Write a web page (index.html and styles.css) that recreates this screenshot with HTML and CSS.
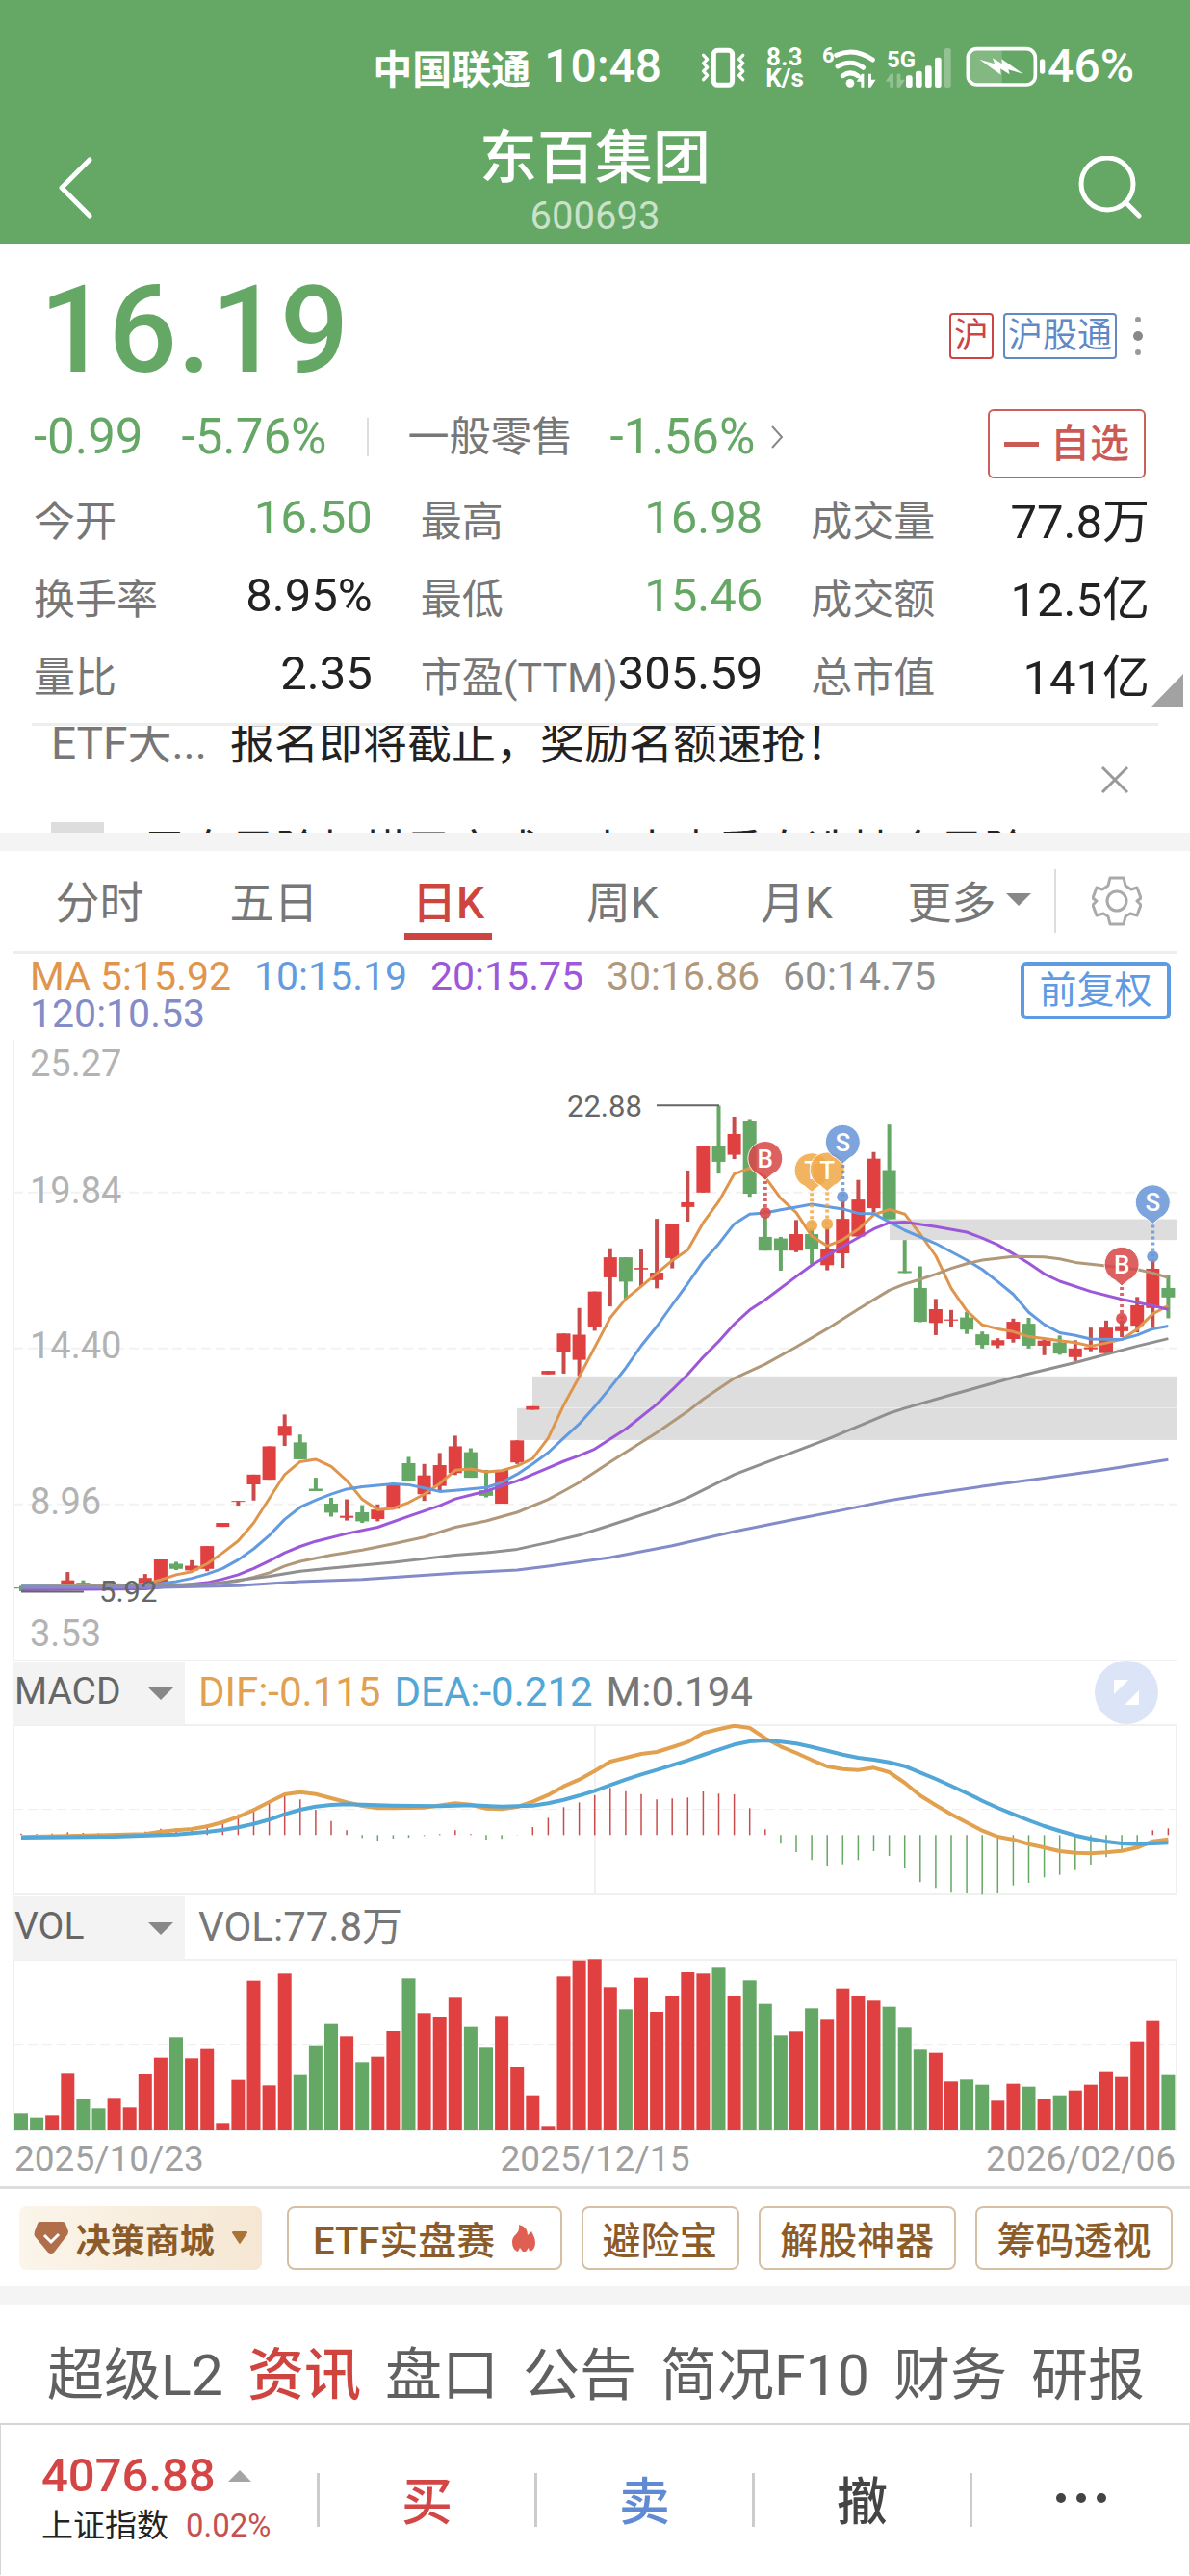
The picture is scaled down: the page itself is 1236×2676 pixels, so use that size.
FILE: index.html
```html
<!doctype html>
<html lang="zh-CN">

<head>
    <meta charset="utf-8">
    <meta name="viewport" content="width=device-width, initial-scale=1">
    <title>东百集团 600693</title>
    <link rel="stylesheet" href="styles.css">
</head>

<body>
    <header class="header">
        <div class="status">
            <span class="carrier">中国联通</span>
            <span class="clock">10:48</span>
            <svg class="status-icons" viewBox="70 40 1086 144" aria-hidden="true">
                <g fill="none" stroke="#fff" stroke-linecap="round" stroke-linejoin="round">
                    <rect x="122" y="62" width="58" height="108" rx="12" stroke-width="15" />
                    <path d="M90 77l12 13-12 12 12 13-12 12 12 13-12 13M213 77l-12 13 12 12-12 13 12 12-12 13 12 13" stroke-width="10" />
                    <path d="M504 77q57-26 113 14M508 112q43-24 80 4M524 141q24-17 47 0" stroke-width="15" />
                </g>
                <g fill="#fff">
                    <circle cx="547" cy="164" r="13" />
                    <path d="M567 159l16-24h7v42h-9v-18zM627 153l-16 24h-7v-42h9v18z" />
                    <path d="M657 159l16-24h9v42h-11v-18zM718 153l-16 24h-9v-42h11v18z" opacity=".3" />
                    <rect x="721" y="140" width="20" height="38" rx="7" />
                    <rect x="751" y="126" width="20" height="52" rx="7" />
                    <rect x="781" y="110" width="20" height="68" rx="7" />
                    <rect x="811" y="84" width="20" height="94" rx="7" />
                    <rect x="841" y="55" width="20" height="123" rx="7" opacity=".3" />
                    <path d="M935 60h85v110h-85q-20 0-20-20v-70q0-20 20-20z" opacity=".2" />
                    <rect x="1138" y="89" width="16" height="46" rx="8" />
                    <path d="M950 90l47 14-6-18 29 18-1-15 67 46-46-13 4 15-29-18 2 19z" />
                </g>
                <rect x="914" y="57" width="210" height="112" rx="28" fill="none" stroke="#fff" stroke-width="11" />
                <text class="st" x="286" y="109" font-size="78">8.3</text>
                <text class="st" x="284" y="176" font-size="78">K/s</text>
                <text class="st" x="460" y="101" font-size="66">6</text>
                <text class="st" x="661" y="114" font-size="72">5G</text>
            </svg>
            <span class="clock">46%</span>
        </div>
        <div class="titlebar">
            <button class="icon-btn back" aria-label="返回">
                <svg width="36" height="64" viewBox="0 0 36 64"><path d="M33 3L4 32l29 29" fill="none" stroke="#fff" stroke-width="5" stroke-linecap="round" stroke-linejoin="round" /></svg>
            </button>
            <div class="title">
                <h1>东百集团</h1>
                <div class="code">600693</div>
            </div>
            <button class="icon-btn" aria-label="搜索">
                <svg width="66" height="66" viewBox="0 0 66 66" fill="none" stroke="#fff" stroke-width="5" stroke-linecap="round"><circle cx="30" cy="29" r="27" /><path d="M49 48l14 14" /></svg>
            </button>
        </div>
    </header>

    <section class="quote">
        <div class="price-row">
            <span class="price">16.19</span>
            <div class="badges">
                <span class="badge red">沪</span>
                <span class="badge blue">沪股通</span>
                <svg width="12" height="44" viewBox="0 0 12 44" fill="#999"><circle cx="6" cy="5" r="3" /><circle cx="6" cy="22" r="5" fill="#888" /><circle cx="6" cy="39" r="3" /></svg>
            </div>
        </div>
        <div class="change-row">
            <span class="green">-0.99</span>
            <span class="green pct">-5.76%</span>
            <a class="sector" href="#sector">一般零售 <span class="green">-1.56%</span>
                <svg width="14" height="26" viewBox="0 0 14 26"><path d="M2 2l10 11L2 24" fill="none" stroke="#888" stroke-width="2" /></svg>
            </a>
            <button class="fav"><i></i>自选</button>
        </div>
        <dl class="stats">
            <div><dt>今开</dt><dd class="green">16.50</dd></div>
            <div><dt>最高</dt><dd class="green">16.98</dd></div>
            <div><dt>成交量</dt><dd>77.8万</dd></div>
            <div><dt>换手率</dt><dd>8.95%</dd></div>
            <div><dt>最低</dt><dd class="green">15.46</dd></div>
            <div><dt>成交额</dt><dd>12.5亿</dd></div>
            <div><dt>量比</dt><dd>2.35</dd></div>
            <div><dt>市盈(TTM)</dt><dd>305.59</dd></div>
            <div><dt>总市值</dt><dd>141亿</dd></div>
        </dl>
        <span class="corner"></span>
    </section>

    <section class="ticker">
        <div class="ticker-list">
            <p><span>ETF大...</span>报名即将截止，奖励名额速抢！</p>
            <p><i></i>早盘风险扫描已完成，点击查看自选持仓风险</p>
        </div>
        <button class="close" aria-label="关闭">
            <svg width="30" height="30" viewBox="0 0 30 30"><path d="M2 2l26 26M28 2L2 28" stroke="#999" stroke-width="3" /></svg>
        </button>
    </section>

    <div class="band"></div>

    <nav class="periods">
        <button>分时</button>
        <button>五日</button>
        <button class="active">日K</button>
        <button>周K</button>
        <button>月K</button>
        <button class="more">更多<i class="down"></i></button>
        <button class="gear" aria-label="设置">
            <svg width="52" height="52" viewBox="0 0 52 52" fill="none" stroke="#aaa" stroke-width="3" stroke-linejoin="round">
                <path d="M19 2h14l2 8 6 4 6-2 4 11-4 3 4 4-4 11-7-2-5 3-2 8H19l-2-8-5-3-7 2-4-11 4-4-4-3 4-11 6 2 6-4z" />
                <circle cx="26" cy="26" r="10" />
            </svg>
        </button>
    </nav>

    <section class="charts">
        <div class="ma">
            <div class="ma-list">
                <span class="ma5">MA 5:15.92</span>
                <span class="ma10">10:15.19</span>
                <span class="ma20">20:15.75</span>
                <span class="ma30">30:16.86</span>
                <span class="ma60">60:14.75</span>
                <span class="ma120">120:10.53</span>
            </div>
            <button class="adjust">前复权</button>
        </div>
        <svg id="kline" class="plot" viewBox="0 0 1236 651" role="img" aria-label="日K线"></svg>

        <div class="sub-head">
            <label class="indicator">
                <select aria-label="指标一"><option>MACD</option><option>KDJ</option></select>
                <i class="down"></i>
            </label>
            <span class="dif">DIF:-0.115</span>
            <span class="dea">DEA:-0.212</span>
            <span>M:0.194</span>
            <button class="expand" aria-label="放大">
                <svg width="66" height="66" viewBox="0 0 66 66"><circle cx="33" cy="33" r="33" fill="#dce5f8" /><path d="M20 20h15L20 35zM46 46H31l15-15z" fill="#fff" /></svg>
            </button>
        </div>
        <svg id="macd" class="plot" viewBox="0 0 1236 178" role="img" aria-label="MACD"></svg>

        <div class="sub-head">
            <label class="indicator">
                <select aria-label="指标二"><option>VOL</option><option>RSI</option></select>
                <i class="down"></i>
            </label>
            <span>VOL:77.8万</span>
        </div>
        <svg id="vol" class="plot" viewBox="0 0 1236 179" role="img" aria-label="成交量"></svg>
        <div class="dates"><span>2025/10/23</span><span>2025/12/15</span><span>2026/02/06</span></div>
    </section>

    <div class="tools">
        <button class="mall">
            <svg width="36" height="36" viewBox="0 0 36 36"><path d="M6 1h24q2 0 3 2l3 8q0 3-2 5L21 33q-3 2-6 0L1 16q-1-2 0-5l3-8q1-2 2-2z" fill="#b06f4a" /><path d="M11 15l7 7 8-8" fill="none" stroke="#fff" stroke-width="3" /></svg>
            决策商城
            <svg class="mall-arrow" width="16" height="14" viewBox="0 0 16 14"><path d="M1 0h14q2 1 0 3l-6 9q-1 2-2 0L1 3q-2-2 0-3z" fill="#aa7437" /></svg>
        </button>
        <button class="w3">ETF实盘赛
            <svg width="24" height="30" viewBox="0 0 24 30"><path d="M7 1q9 2 9 11l4-4q4 7 4 12 0 7-6 9l-1-4-3 4-3 0-3-4-2 4Q0 27 0 19q0-5 4-8 4-4 3-10z" fill="#df6052" /></svg>
        </button>
        <button class="w1">避险宝</button>
        <button class="w2">解股神器</button>
        <button class="w2">筹码透视</button>
    </div>

    <div class="band"></div>

    <nav class="tabs">
        <a href="#l2">超级L2</a>
        <a href="#news" class="active">资讯</a>
        <a href="#book">盘口</a>
        <a href="#notice">公告</a>
        <a href="#f10">简况F10</a>
        <a href="#finance">财务</a>
        <a href="#report">研报</a>
    </nav>

    <footer class="bar">
        <div class="index">
            <div class="index-value">4076.88<i class="up"></i></div>
            <div class="index-name">上证指数<span>0.02%</span></div>
        </div>
        <button class="buy">买</button>
        <button class="sell">卖</button>
        <button>撤</button>
        <button aria-label="更多操作">
            <svg width="54" height="12" viewBox="0 0 54 12" fill="#444"><circle cx="6" cy="6" r="5" /><circle cx="27" cy="6" r="5" /><circle cx="48" cy="6" r="5" /></svg>
        </button>
    </footer>

    <script src="chart.js"></script>
</body>

</html>
```

FILE: styles.css
```css
* {
    box-sizing: border-box;
}

body {
    margin: 0;
    background: #fff;
    color: #222;
    font-family: Roboto, "Noto Sans CJK SC", sans-serif;
    font-size: 43px;
}

button,
select {
    margin: 0;
    padding: 0;
    border: 0;
    background: none;
    color: inherit;
    font: inherit;
}

svg {
    display: block;
    flex: none;
}

a {
    color: inherit;
    text-decoration: none;
}

.green {
    color: #65a765;
}

/* header */
.header {
    background: #65a765;
    color: #fff;
}

.status {
    display: flex;
    align-items: center;
    justify-content: flex-end;
    height: 129px;
    padding: 8px 58px 0 0;
    font-weight: 500;
}

.carrier {
    margin-right: 14px;
    font-size: 41px;
    font-weight: 700;
}

.clock {
    font-size: 48px;
}

.status-icons {
    width: 362px;
    height: 48px;
    margin: 0 2px 0 37px;
}

.st {
    fill: #fff;
    font-weight: 700;
}

.titlebar {
    display: flex;
    align-items: center;
    justify-content: space-between;
    height: 124px;
    padding: 4px 50px 0;
}

.icon-btn {
    display: flex;
    width: 66px;
    padding-top: 4px;
}

.back {
    padding-left: 10px;
}

.title {
    text-align: center;
}

.title h1 {
    margin: 0;
    font-size: 60px;
    font-weight: 500;
    line-height: 64px;
}

.code {
    color: #c9e2c9;
    font-size: 40px;
    line-height: 56px;
}

/* quote */
.quote {
    position: relative;
    height: 498px;
    padding: 0 42px 0 35px;
}

.price-row {
    display: flex;
    align-items: center;
    justify-content: space-between;
    height: 158px;
    padding-top: 22px;
}

.price {
    padding-left: 6px;
    color: #65a765;
    font-size: 126px;
    font-weight: 500;
    line-height: 130px;
}

.badges {
    display: flex;
    align-items: center;
    gap: 10px;
    padding: 12px 6px 0 0;
}

.badge {
    height: 48px;
    padding: 0 3px;
    border: 2px solid;
    border-radius: 4px;
    font-size: 36px;
    line-height: 44px;
}

.badges svg {
    margin-left: 6px;
}

.red {
    color: #c44;
}

.blue {
    color: #6089c6;
}

.change-row {
    display: flex;
    align-items: center;
    height: 86px;
    font-size: 51px;
    line-height: 60px;
}

.pct {
    margin-left: 40px;
}

.sector {
    display: flex;
    align-items: center;
    gap: 16px;
    height: 40px;
    margin-left: 42px;
    padding-left: 40px;
    border-left: 2px solid #ddd;
    color: #777;
    font-size: 43px;
}

.sector .green {
    margin-left: 22px;
    font-size: 51px;
}

.fav {
    display: flex;
    align-items: center;
    justify-content: center;
    gap: 12px;
    width: 164px;
    height: 72px;
    margin: 14px 4px 0 auto;
    border: 2px solid #c9605c;
    border-radius: 6px;
    color: #cb5a56;
    font-size: 41px;
    font-weight: 500;
}

.fav i {
    width: 36px;
    height: 5px;
    background: #cb5a56;
}

.stats {
    display: grid;
    grid-template-columns: repeat(3, 1fr);
    grid-auto-rows: 81px;
    column-gap: 50px;
    margin: 0;
}

.stats div {
    display: flex;
    align-items: center;
    justify-content: space-between;
    white-space: nowrap;
}

.stats dt {
    color: #777;
    font-size: 43px;
}

.stats dd {
    margin: 0;
    font-size: 49px;
}

.corner {
    position: absolute;
    right: 7px;
    bottom: 17px;
    border-bottom: 34px solid #a2a2a2;
    border-left: 33px solid transparent;
}

/* ticker */
.ticker {
    display: flex;
    align-items: center;
    height: 114px;
    margin: 0 33px;
    border-top: 3px solid #eee;
}

.ticker-list {
    flex: 1;
    height: 100%;
    padding-left: 20px;
    overflow: hidden;
    font-size: 46px;
}

.ticker-list p {
    display: flex;
    height: 104px;
    margin: -12px 0 0;
    line-height: 60px;
    white-space: nowrap;
}

.ticker-list p + p {
    margin-top: 8px;
}

.ticker-list span {
    width: 186px;
    color: #777;
}

.ticker-list i {
    width: 55px;
    height: 40px;
    margin: 0 40px 0 0;
    background: #ddd;
}

.close {
    margin-right: 30px;
}

.band {
    height: 19px;
    background: #f4f4f4;
}

/* period tabs */
.periods {
    display: flex;
    align-items: center;
    height: 107px;
    margin: 0 13px;
    border-bottom: 3px solid #eee;
    color: #777;
    font-size: 46px;
}

.periods button {
    flex: 181;
    align-self: stretch;
    display: flex;
    align-items: center;
    justify-content: center;
    padding-bottom: 4px;
    white-space: nowrap;
}

.periods .active {
    position: relative;
    color: #ce453f;
    font-weight: 500;
}

.periods .active::after {
    content: "";
    position: absolute;
    bottom: 12px;
    width: 91px;
    height: 7px;
    background: #ce453f;
}

.periods .more {
    gap: 10px;
    flex: 177;
}

.periods .gear {
    flex: 126;
    align-self: center;
    height: 66px;
    padding: 0;
    border-left: 2px solid #ddd;
}

.down {
    border: 13px solid transparent;
    border-top-color: #888;
    border-bottom: 0;
}

/* charts */
.ma {
    display: flex;
    justify-content: space-between;
    padding: 4px 20px 1px 31px;
    font-size: 41px;
}

.ma-list {
    display: flex;
    flex-wrap: wrap;
    column-gap: 24px;
    width: 980px;
    line-height: 39px;
}

.ma5 { color: #e0954c; }
.ma10 { color: #629be0; }
.ma20 { color: #9d58da; }
.ma30 { color: #b1987a; }
.ma60 { color: #909090; }
.ma120 { color: #838bc8; }

.adjust {
    width: 156px;
    height: 60px;
    margin-top: 4px;
    border: 4px solid #5e9be2;
    border-radius: 6px;
    color: #5e9be2;
    font-size: 39px;
    line-height: 50px;
}

.plot {
    width: 100%;
    height: auto;
}

.axis {
    fill: #b3b3b3;
    font-size: 38px;
}

.peak {
    fill: #666;
    font-size: 31px;
}

.pin {
    fill: #fff;
    font-size: 26px;
    font-weight: 500;
    text-anchor: middle;
}

.sub-head {
    display: flex;
    align-items: center;
    gap: 14px;
    height: 66px;
    padding: 0 33px 0 13px;
    color: #777;
    font-size: 42px;
    line-height: 62px;
}

.indicator {
    position: relative;
    width: 179px;
    height: 66px;
}

.indicator select {
    width: 100%;
    height: 100%;
    padding: 0 0 6px 2px;
    border-radius: 0;
    background: #f3f3f3;
    color: #666;
    font-size: 39px;
    appearance: none;
}

.indicator .down {
    position: absolute;
    top: 28px;
    right: 12px;
    pointer-events: none;
}

.dif { color: #e2a14f; }
.dea { color: #52a7d6; }

.expand {
    margin-left: auto;
}

.dates {
    display: flex;
    justify-content: space-between;
    padding: 0 15px;
    color: #a0a0a0;
    font-size: 37px;
    line-height: 57px;
}

/* tools */
.tools {
    display: flex;
    align-items: center;
    gap: 20px;
    height: 104px;
    padding: 0 18px 0 20px;
    border-top: 3px solid #ddd;
    color: #8b5c29;
    font-size: 40px;
    font-weight: 500;
    white-space: nowrap;
}

.tools button {
    display: flex;
    align-items: center;
    justify-content: center;
    gap: 18px;
    height: 66px;
    border: 2px solid #d5c0a4;
    border-radius: 8px;
}

.tools .w1 { flex: 162; }
.tools .w2 { flex: 204; }
.tools .w3 { flex: 286; }

.tools .mall {
    flex: 255;
    gap: 8px;
    margin-right: 6px;
    border: 0;
    background: linear-gradient(90deg, #fbf5ea, #f5e7d3);
    font-size: 36px;
    font-weight: 700;
}

.mall-arrow {
    margin-left: 10px;
}

/* bottom */
.tabs {
    display: flex;
    align-items: center;
    justify-content: space-between;
    height: 123px;
    padding: 14px 47px 0 49px;
    color: #606060;
    font-size: 59px;
    white-space: nowrap;
}

.tabs .active {
    color: #d0443f;
    font-weight: 500;
}

.bar {
    display: grid;
    grid-template-columns: 328fr 226fr 226fr 226fr 228fr;
    align-items: center;
    height: 158px;
    border: 1px solid #d5d5d5;
    border-top-width: 2px;
    border-bottom: 0;
    color: #444;
}

.index {
    padding-left: 42px;
    white-space: nowrap;
}

.index-value {
    display: flex;
    align-items: center;
    gap: 13px;
    color: #d44646;
    font-size: 49px;
    font-weight: 500;
    line-height: 54px;
}

.up {
    border: 12px solid transparent;
    border-top: 0;
    border-bottom-color: #a5a5a5;
}

.index-name {
    color: #222;
    font-size: 33px;
    line-height: 50px;
}

.index-name span {
    margin-left: 18px;
    color: #c55050;
}

.bar button {
    display: flex;
    align-items: center;
    justify-content: center;
    height: 56px;
    padding-bottom: 4px;
    border-left: 3px solid #ccc;
    font-size: 53px;
    font-weight: 500;
}

.bar .buy { color: #d44646; }
.bar .sell { color: #608bd4; }
```

FILE: chart.js
```js
var NS = 'http://www.w3.org/2000/svg';
var RED = '#e04040', GREEN = '#65a765';
var STEP = 16.1, FIRST = 22;

function add(svg, tag, attrs, text) {
    var el = document.createElementNS(NS, tag);
    for (var k in attrs) el.setAttribute(k, attrs[k]);
    if (text) el.textContent = text;
    svg.appendChild(el);
    return el;
}
function cx(i) { return FIRST + STEP * i; }

// "index:value" pairs -> polyline
function line(svg, data, color, y, width) {
    var pts = data.split(' ').map(function (p) {
        var a = p.split(':');
        return cx(+a[0]).toFixed(1) + ',' + y(+a[1]).toFixed(1);
    });
    add(svg, 'polyline', { points: pts.join(' '), fill: 'none', stroke: color, 'stroke-width': width, 'stroke-linejoin': 'round' });
}

/* ---- K line ---- */
var k = document.getElementById('kline');
function ky(v) { return 6 + v / 2.45; }

add(k, 'path', { d: 'M14 6V651M14 651H1222', stroke: '#f0f0f0', 'stroke-width': 2, fill: 'none' });
[389, 786, 1183].forEach(function (v) {
    add(k, 'path', { d: 'M14 ' + ky(v) + 'H1222', stroke: '#f2f2f2', 'stroke-width': 2, 'stroke-dasharray': '10 5' });
});
// gaps: x, top, bottom
[[537, 938, 1019], [553, 857, 937], [924, 457, 510]].forEach(function (g) {
    add(k, 'rect', { x: g[0], y: ky(g[1]), width: 1222 - g[0], height: (g[2] - g[1]) / 2.45, fill: '#ddd' });
});
[[25.27, 93], [19.84, 416], [14.40, 812], [8.96, 1209], [3.53, 1544]].forEach(function (a) {
    add(k, 'text', { x: 31, y: ky(a[1]), 'class': 'axis' }, a[0].toFixed(2));
});

// index, up(1)/down(0), high, top, bottom, low
var candles = [
    [0, 0, 1390, 1394, 1397, 1404], [3, 1, 1355, 1376, 1392, 1392], [4, 0, 1376, 1382, 1390, 1390], [6, 1, 1380, 1384, 1390, 1390],
    [8, 1, 1360, 1370, 1388, 1388], [9, 1, 1323, 1323, 1383, 1383], [10, 0, 1329, 1334, 1347, 1350], [11, 1, 1325, 1339, 1351, 1352],
    [12, 1, 1289, 1289, 1347, 1353], [13, 1, 1230, 1230, 1240, 1240], [14, 1, 1174, 1174, 1176, 1186], [15, 1, 1107, 1107, 1132, 1173],
    [16, 1, 1035, 1035, 1120, 1120], [17, 1, 954, 983, 1008, 1034], [18, 0, 1005, 1025, 1068, 1068], [19, 0, 1115, 1143, 1149, 1149],
    [20, 0, 1166, 1181, 1204, 1214], [21, 1, 1170, 1212, 1217, 1224], [22, 0, 1185, 1203, 1226, 1230], [23, 1, 1183, 1196, 1220, 1226],
    [24, 1, 1128, 1133, 1194, 1196], [25, 0, 1062, 1078, 1123, 1125], [26, 1, 1080, 1109, 1157, 1174], [27, 1, 1052, 1083, 1136, 1148],
    [28, 1, 1008, 1035, 1103, 1108], [29, 0, 1040, 1050, 1115, 1115], [30, 0, 1095, 1147, 1161, 1165], [31, 1, 1095, 1095, 1181, 1181],
    [32, 1, 1020, 1020, 1076, 1080], [33, 1, 933, 933, 942, 942], [34, 1, 843, 843, 852, 852], [35, 1, 748, 748, 795, 850],
    [36, 1, 683, 751, 815, 856], [37, 1, 641, 641, 730, 741], [38, 1, 531, 554, 605, 679], [39, 0, 554, 554, 616, 660],
    [40, 1, 533, 581, 585, 628], [41, 1, 456, 593, 612, 633], [42, 1, 470, 470, 556, 582], [43, 1, 333, 414, 426, 463],
    [44, 1, 271, 271, 389, 389], [45, 0, 168, 271, 311, 341], [46, 1, 196, 240, 293, 304], [47, 0, 202, 206, 392, 400],
    [48, 0, 450, 502, 537, 537], [49, 0, 502, 506, 537, 588], [50, 1, 459, 495, 537, 541], [51, 0, 480, 495, 532, 572],
    [52, 1, 478, 532, 574, 587], [53, 1, 410, 456, 544, 581], [54, 1, 357, 407, 501, 501], [55, 1, 286, 303, 429, 440],
    [56, 0, 216, 332, 457, 457], [57, 0, 510, 589, 594, 594], [58, 0, 577, 632, 718, 719], [59, 1, 660, 686, 721, 752],
    [60, 1, 688, 712, 715, 732], [61, 0, 693, 707, 738, 749], [62, 0, 743, 750, 777, 786], [63, 1, 760, 765, 778, 785],
    [64, 1, 710, 718, 762, 771], [65, 0, 708, 723, 779, 786], [66, 1, 763, 766, 779, 803], [67, 0, 753, 771, 799, 802],
    [68, 1, 765, 786, 808, 818], [69, 1, 733, 783, 788, 793], [70, 1, 715, 733, 798, 798], [71, 1, 715, 729, 742, 757],
    [72, 1, 655, 676, 728, 745], [73, 1, 560, 583, 683, 731], [74, 0, 598, 632, 656, 709]
];
candles.forEach(function (c) {
    var x = cx(c[0]), color = c[1] ? RED : GREEN;
    add(k, 'path', { d: 'M' + x + ' ' + ky(c[2]) + 'V' + ky(c[5]), stroke: c[1] ? '#c94c4c' : GREEN, 'stroke-width': 4 });
    add(k, 'rect', { x: x - 7, y: ky(c[3]), width: 14, height: Math.max(1, (c[4] - c[3]) / 2.45), fill: color });
});

line(k, '0:1391 7:1389 8:1385 9:1375 10:1362 11:1354 12:1334 13:1306 14:1276 15:1230 16:1168 17:1107 18:1074 19:1068 20:1086 21:1122 22:1170 23:1196 24:1193 25:1178 26:1157 27:1130 28:1096 29:1093 30:1100 31:1097 32:1085 33:1066 34:1014 35:930 36:858 37:783 38:708 39:660 40:628 41:595 42:562 43:535 44:466 45:412 46:342 47:327 48:350 49:404 50:440 51:500 52:525 53:509 54:483 55:446 56:432 57:444 58:495 59:550 60:633 61:690 62:726 63:736 64:743 65:756 66:761 67:766 68:771 69:780 70:772 71:763 72:737 73:698 74:677', '#e0954c', ky, 3);
line(k, '0:1391 8:1388 9:1384 10:1379 11:1371 12:1360 13:1346 14:1324 15:1296 16:1262 17:1221 18:1190 19:1172 20:1157 21:1144 22:1138 24:1131 25:1133 26:1141 27:1150 28:1147 30:1140 31:1127 32:1106 33:1080 34:1051 35:1014 36:978 37:934 38:886 39:836 40:779 41:730 42:675 43:621 44:564 45:520 46:469 47:444 48:441 49:433 50:426 51:419 52:425 53:431 54:442 55:443 56:464 57:485 59:519 61:561 62:585 63:616 64:648 65:694 66:725 67:746 68:753 69:762 71:763 72:752 73:736 74:729', '#629be0', ky, 3);
line(k, '0:1400 8:1398 10:1390 12:1382 13:1373 14:1362 15:1346 16:1327 17:1306 18:1290 19:1277 21:1257 23:1241 25:1213 27:1186 28:1169 30:1149 32:1123 34:1090 35:1073 36:1059 37:1042 39:991 41:928 42:891 43:852 44:808 45:768 46:724 47:688 48:662 50:603 51:574 53:526 55:482 56:466 57:464 59:476 61:490 62:505 63:522 64:545 65:569 66:596 67:615 69:641 71:661 73:677 74:687', '#9d58da', ky, 3);
line(k, '0:1392 12:1386 14:1378 15:1368 16:1357 17:1340 18:1328 20:1312 22:1299 24:1283 26:1266 28:1241 30:1225 32:1203 34:1170 35:1149 36:1127 38:1075 41:1000 43:946 44:915 46:862 48:826 50:782 52:736 54:686 56:638 57:622 58:610 59:597 60:582 61:570 62:561 64:552 66:553 67:558 68:567 70:576 72:585 73:594 74:606', '#b1987a', ky, 3);
line(k, '0:1394 12:1388 14:1376 16:1366 18:1353 20:1345 24:1330 28:1312 30:1306 32:1297 34:1280 36:1261 38:1236 41:1197 43:1166 46:1107 50:1047 52:1017 54:984 56:951 57:938 60:904 64:860 68:822 72:780 74:761', '#909090', ky, 3);
line(k, '0:1394 9:1394 14:1390 18:1379 22:1374 28:1358 32:1350 34:1340 38:1318 42:1288 46:1252 50:1220 53:1197 56:1173 58:1160 62:1137 66:1116 70:1094 74:1069', '#838bc8', ky, 3);

add(k, 'path', { d: 'M682 ' + ky(167) + 'H747M22 ' + ky(1405) + 'H87', stroke: '#666', 'stroke-width': 2 });
add(k, 'text', { x: 589, y: ky(195), 'class': 'peak' }, '22.88');
add(k, 'text', { x: 103, y: ky(1431), 'class': 'peak' }, '5.92');

// trade marks: index, letter, pin centre, dot, colour
[[48, 'B', 304, 441, '#d84a4a'], [51, 'T', 334, 473, '#f0a94a'], [52, 'T', 332, 469, '#f0a94a'],
 [53, 'S', 262, 400, '#6b97d8'], [71, 'B', 573, 710, '#d84a4a'], [73, 'S', 415, 552, '#6b97d8']].forEach(function (m) {
    var x = cx(m[0]), y = ky(m[2]), d = ky(m[3]);
    add(k, 'path', { d: 'M' + x + ' ' + (y + 23) + 'V' + d, stroke: m[4], 'stroke-width': 4, 'stroke-dasharray': '3 3', opacity: .85 });
    add(k, 'circle', { cx: x, cy: d, r: 6, fill: m[4], opacity: .9 });
    add(k, 'path', { d: 'M' + (x - 7) + ' ' + (y + 16) + 'A18 18 0 1 1 ' + (x + 7) + ' ' + (y + 16) + 'L' + x + ' ' + (y + 22) + 'Z', fill: m[4], opacity: .87, stroke: '#fff', 'stroke-width': 1 });
    add(k, 'text', { x: x, y: y + 9, 'class': 'pin' }, m[1]);
});

/* ---- MACD ---- */
var macd = document.getElementById('macd');
function my(v) { return (v - 245) / 3; }
add(macd, 'path', { d: 'M14 1H1222V177H14ZM618 1V177', stroke: '#f0f0f0', 'stroke-width': 2, fill: 'none' });
add(macd, 'path', { d: 'M14 ' + my(511) + 'H1222', stroke: '#eee', 'stroke-dasharray': '10 5' });
[586, 588, 586, 582, 584, 585, 585, 584, 580, 571, 569, 571, 558, 545, 526, 507, 483, 466, 480, 512, 547, 576, 600, 608, 602,
 599, 594, 588, 576, 588, 605, 603, 590, 566, 537, 504, 489, 467, 444, 454, 463, 480, 477, 474, 455, 462, 464, 507, 573, 618,
 644, 669, 686, 682, 669, 641, 656, 692, 738, 756, 768, 773, 777, 770, 748, 740, 723, 715, 700, 683, 660, 637, 612, 576, 570].forEach(function (v, i) {
    add(macd, 'path', { d: 'M' + cx(i) + ' ' + my(591) + 'V' + my(v), stroke: v < 591 ? '#c94c4c' : GREEN, 'stroke-width': 1.5 });
});
line(macd, '0:597 3:594 8:588 9:580 10:576 11:572 12:564 13:551 14:534 15:513 16:488 17:464 18:457 19:463 20:476 21:489 22:500 23:507 24:507 26:505 28:492 29:496 30:508 31:510 32:503 33:487 34:466 35:439 36:418 37:391 38:362 39:350 40:338 41:332 42:317 43:301 44:273 45:261 46:250 47:257 48:289 49:315 50:335 51:357 52:377 53:385 54:388 55:381 56:395 57:428 58:468 59:498 60:526 61:552 62:577 63:596 64:605 65:619 66:630 67:641 68:646 69:648 70:645 71:640 72:630 73:610 74:604', '#e2a14f', my, 4);
line(macd, '0:599 6:596 10:589 12:581 13:575 14:567 15:556 16:543 17:526 18:512 19:502 20:497 21:495 22:496 24:499 27:501 29:498 31:502 33:499 34:492 35:481 36:468 37:453 38:435 39:418 40:402 41:388 42:373 43:358 44:341 45:325 46:309 47:299 48:296 49:300 50:306 51:316 52:328 53:340 54:350 55:356 56:364 57:376 58:396 59:416 60:438 61:460 62:484 63:506 64:526 65:545 66:563 67:578 68:592 69:603 70:611 71:617 72:619 73:617 74:615', '#52a7d6', my, 4);

/* ---- volume, r = up, g = down ---- */
var vol = document.getElementById('vol');
function vy(v) { return (v - 197) / 3; }
add(vol, 'path', { d: 'M14 1H1222V178H14Z', stroke: '#f0f0f0', 'stroke-width': 2, fill: 'none' });
add(vol, 'path', { d: 'M14 ' + vy(463) + 'H1222', stroke: '#eee', 'stroke-dasharray': '10 5' });
('g678 g691 r684 r552 g634 g663 r630 r660 r556 r505 g441 r507 r478 r708 r574 r265 r591 r243 g559 g466 g400 r438 g519 r502 r422 ' +
 'g258 r366 r377 r318 g409 g471 r375 r533 r622 r720 r252 r202 r198 r285 g354 r256 r362 r313 r239 r243 g222 r313 g264 g337 g435 ' +
 'r423 g351 r384 r289 r312 r327 g346 g411 g480 r490 r579 g573 g589 r639 r586 g595 r633 g622 r607 r589 r547 r565 r454 r388 g559').split(' ').forEach(function (s, i) {
    var v = +s.slice(1);
    add(vol, 'rect', { x: cx(i) - 7, y: vy(v), width: 14, height: (731 - v) / 3, fill: s[0] === 'r' ? RED : GREEN });
});
```
